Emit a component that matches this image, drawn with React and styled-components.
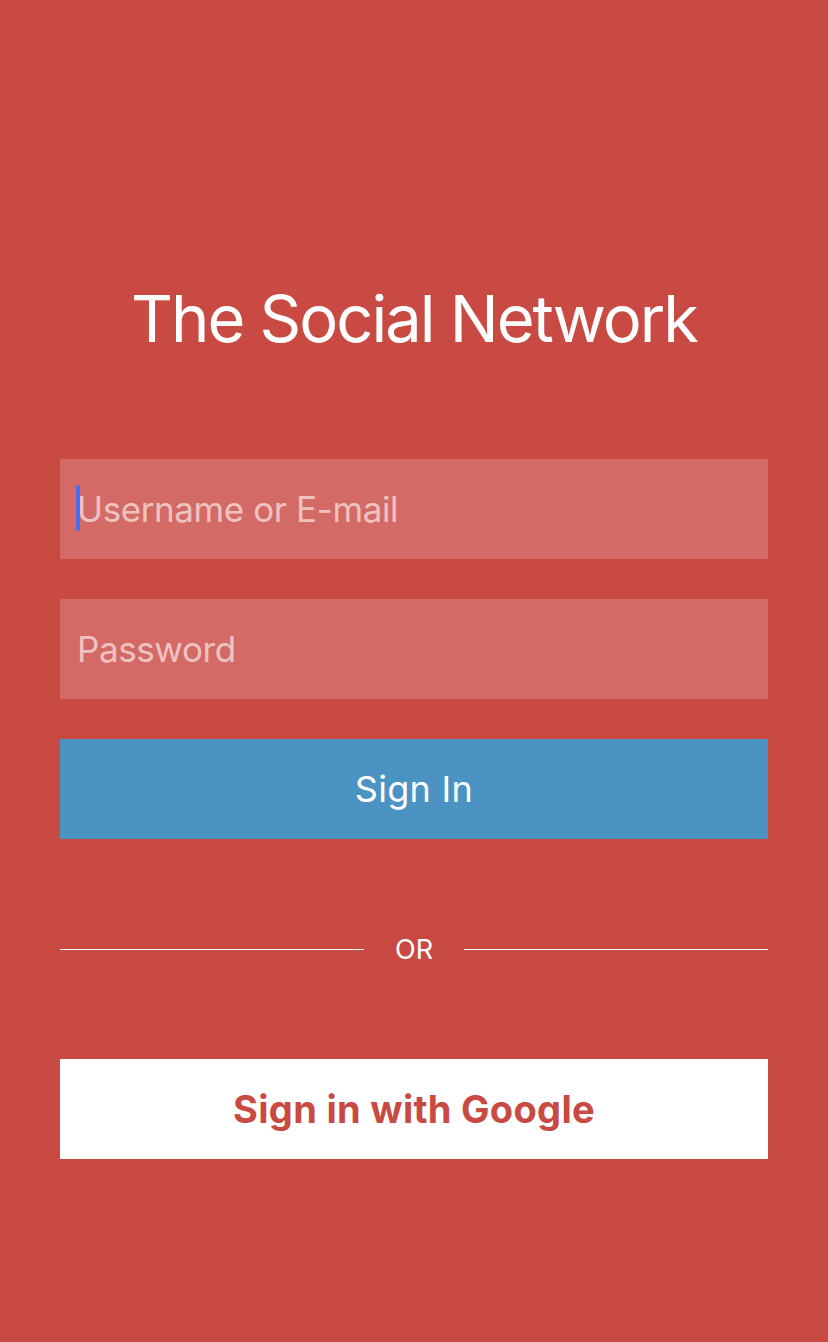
import React from "react";
import styled, { createGlobalStyle } from "styled-components";

const Global = createGlobalStyle`
  html, body { margin: 0; padding: 0; background: #c84a42; }
  body { font-family: Inter, "Noto Sans", sans-serif; }
  * { box-sizing: border-box; }
`;

const Page = styled.div`
  width: 828px;
  height: 1342px;
  background: #c84a42;
  display: flex;
  flex-direction: column;
  align-items: center;
  padding: 0 60px;
`;

const Title = styled.h1`
  margin: 279px 0 0;
  height: 80px;
  line-height: 80px;
  font-size: 65px;
  font-weight: 400;
  color: #fff;
  letter-spacing: -2px;
  text-align: center;
`;

const Form = styled.div`
  width: 100%;
  margin-top: 100px;
  display: flex;
  flex-direction: column;
  gap: 40px;
`;

const Field = styled.div`
  position: relative;
  height: 100px;
  background: #d36a65;
  display: flex;
  align-items: center;
  padding-left: 17px;
  font-size: 35px;
  letter-spacing: -0.4px;
  color: rgba(255, 255, 255, 0.62);
`;

const Caret = styled.span`
  position: absolute;
  left: 16px;
  top: 26px;
  width: 4px;
  height: 46px;
  border-radius: 2px;
  background: #4a6ef0;
`;

const Button = styled.div`
  height: 100px;
  display: flex;
  align-items: center;
  justify-content: center;
  font-size: ${(p) => (p.$google ? "38px" : "36px")};
  letter-spacing: 0.3px;
  background: ${(p) => (p.$google ? "#fff" : "#4a93c2")};
  color: ${(p) => (p.$google ? "#c84a42" : "#fff")};
  font-weight: ${(p) => (p.$google ? 700 : 400)};
`;

const Divider = styled.div`
  width: 100%;
  margin-top: 90px;
  height: 40px;
  display: flex;
  align-items: center;
  gap: 31px;
  color: #fff;
  font-size: 27px;
`;

const Line = styled.div`
  flex: 1;
  height: 1px;
  background: #fff;
`;

const Bottom = styled.div`
  width: 100%;
  margin-top: 90px;
`;

export default function App() {
  return (
    <>
      <Global />
      <Page>
        <Title>The Social Network</Title>
        <Form>
          <Field>
            <Caret />
            Username or E-mail
          </Field>
          <Field>Password</Field>
          <Button>Sign In</Button>
        </Form>
        <Divider>
          <Line />
          OR
          <Line />
        </Divider>
        <Bottom>
          <Button $google>Sign in with Google</Button>
        </Bottom>
      </Page>
    </>
  );
}
